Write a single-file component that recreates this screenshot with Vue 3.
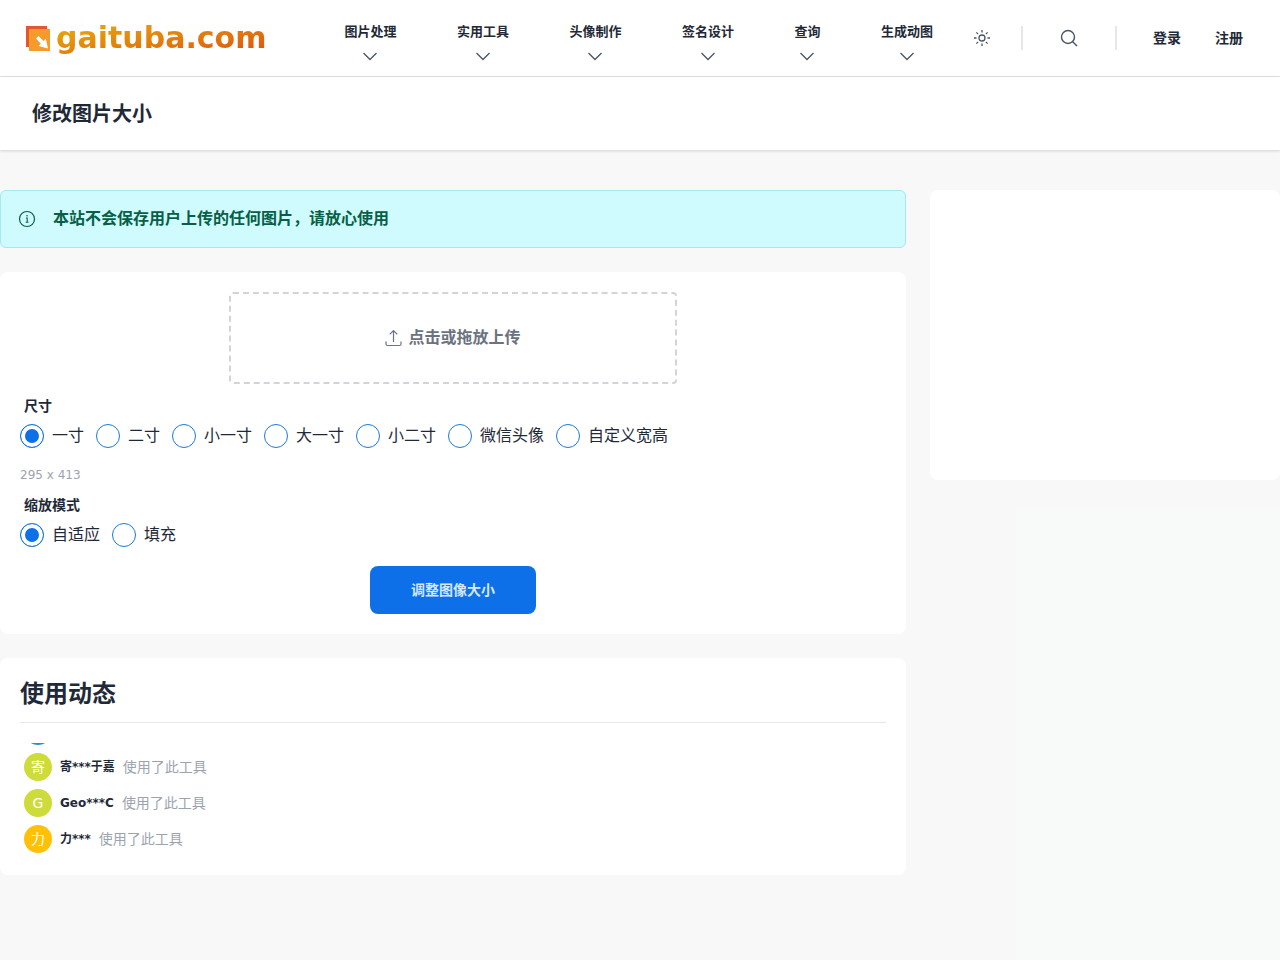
<script setup>
import { ref, computed } from 'vue'

const menus = ['图片处理', '实用工具', '头像制作', '签名设计', '查询', '生成动图']

const sizes = [
  { label: '一寸', hint: '295 x 413' },
  { label: '二寸', hint: '413 x 579' },
  { label: '小一寸', hint: '260 x 378' },
  { label: '大一寸', hint: '390 x 567' },
  { label: '小二寸', hint: '413 x 531' },
  { label: '微信头像', hint: '200 x 200' },
  { label: '自定义宽高', hint: '' },
]
const modes = ['自适应', '填充']

const size = ref('一寸')
const mode = ref('自适应')
const hint = computed(() => sizes.find((s) => s.label === size.value).hint)

const activity = [
  { initial: '', name: '', tone: 'blue' },
  { initial: '寄', name: '寄***于嘉', tone: 'lime' },
  { initial: 'G', name: 'Geo***C', tone: 'lime' },
  { initial: '力', name: '力***', tone: 'amber' },
]
</script>

<template>
  <div class="page">
    <header class="topbar">
      <a class="brand" href="#">
        <svg class="brand-mark" viewBox="0 0 26 26" aria-hidden="true">
          <rect x="1" y="1" width="21" height="21" fill="#e2572b" />
          <rect x="4" y="4" width="21" height="22" fill="#f79a2c" />
          <path d="M11 13.500 L13.500 11 L18.500 16 L20.800 13.800 L23 23.500 L13.500 21 L15.800 18.700 Z" fill="#fff" />
        </svg>
        <span class="brand-name">gaituba.com</span>
      </a>
      <nav class="nav">
        <button v-for="m in menus" :key="m" type="button" class="nav-item">
          <span>{{ m }}</span>
          <svg width="16" height="16" viewBox="0 0 16 16" fill="none" stroke="currentColor" stroke-width="1.300" aria-hidden="true">
            <path d="M1.500 5 L8 11.500 L14.500 5" />
          </svg>
        </button>
      </nav>
      <div class="tools">
        <button type="button" class="icon-btn" aria-label="切换主题">
          <svg width="16" height="16" viewBox="0 0 16 16" fill="none" stroke="currentColor" stroke-width="1.300" aria-hidden="true">
            <circle cx="8" cy="8" r="3" />
            <path d="M8 0v2.500M8 13.500V16M0 8h2.500M13.500 8H16M2.400 2.400l1.700 1.700M11.900 11.900l1.700 1.700M2.400 13.600l1.700-1.700M11.900 4.100l1.700-1.700" />
          </svg>
        </button>
        <span class="rule"></span>
        <button type="button" class="icon-btn search" aria-label="搜索">
          <svg width="18" height="18" viewBox="0 0 18 18" fill="none" stroke="currentColor" stroke-width="1.400" aria-hidden="true">
            <circle cx="8" cy="8" r="6.500" />
            <path d="M12.700 12.700 L17 17" />
          </svg>
        </button>
        <span class="rule"></span>
        <div class="account">
          <a href="#">登录</a>
          <a href="#">注册</a>
        </div>
      </div>
    </header>

    <div class="titlebar"><h1>修改图片大小</h1></div>

    <div class="columns">
      <main class="main">
        <div class="notice" role="note">
          <svg width="18" height="18" viewBox="0 0 18 18" fill="none" stroke="currentColor" aria-hidden="true">
            <circle cx="9" cy="9" r="7.500" stroke-width="1.200" />
            <path d="M8 8h1.200v4M7.700 12.200h2.800" stroke-width="1.100" />
            <circle cx="9" cy="5.800" r="0.800" fill="currentColor" stroke="none" />
          </svg>
          <span>本站不会保存用户上传的任何图片，请放心使用</span>
        </div>

        <form class="card form" @submit.prevent>
          <button type="button" class="drop">
            <svg width="17" height="18" viewBox="0 0 17 18" fill="none" stroke="currentColor" stroke-width="1.200" aria-hidden="true">
              <path d="M1 12.500v2.500q0 1.500 1.500 1.500h12q1.500 0 1.500-1.500V12.500M8.500 13V1.500M4.700 5.300L8.500 1.500l3.800 3.800" />
            </svg>
            <span>点击或拖放上传</span>
          </button>

          <fieldset>
            <legend>尺寸</legend>
            <div class="options">
              <label v-for="s in sizes" :key="s.label">
                <input v-model="size" type="radio" name="size" :value="s.label" />
                <span>{{ s.label }}</span>
              </label>
            </div>
          </fieldset>
          <p class="hint">{{ hint }}</p>
          <fieldset>
            <legend>缩放模式</legend>
            <div class="options">
              <label v-for="m in modes" :key="m">
                <input v-model="mode" type="radio" name="mode" :value="m" />
                <span>{{ m }}</span>
              </label>
            </div>
          </fieldset>
          <button type="submit" class="submit">调整图像大小</button>
        </form>

        <section class="card feed">
          <h2>使用动态</h2>
          <div class="feed-window">
            <ul>
              <li v-for="(a, i) in activity" :key="i">
                <span class="avatar" :class="a.tone">{{ a.initial }}</span>
                <template v-if="a.name">
                  <strong>{{ a.name }}</strong>
                  <span class="did">使用了此工具</span>
                </template>
              </li>
            </ul>
          </div>
        </section>
      </main>

      <aside class="side">
        <div class="side-card"></div>
        <div class="side-tint"></div>
      </aside>
    </div>
  </div>
</template>

<style>
body {
  margin: 0;
  background: #f8f8f8;
}
</style>

<style scoped>
* {
  box-sizing: border-box;
}
.page {
  display: flex;
  flex-direction: column;
  min-height: 100vh;
  color: #1f2937;
  font-family: "DejaVu Sans", "Noto Sans CJK SC", sans-serif;
  font-size: 16px;
  line-height: 24px;
}
button {
  padding: 0;
  border: 0;
  background: none;
  color: inherit;
  font: inherit;
  cursor: pointer;
}
a {
  color: inherit;
  text-decoration: none;
}
svg {
  display: block;
  flex: none;
}
.topbar {
  display: flex;
  align-items: center;
  height: 77px;
  padding: 0 32px 0 25px;
  border-bottom: 1px solid #e2e3e5;
  background: #fff;
}
.brand {
  display: flex;
  align-items: center;
  gap: 5px;
}
.brand-mark {
  width: 26px;
  height: 26px;
}
.brand-name {
  font-size: 30px;
  line-height: 36px;
  font-weight: 700;
  color: transparent;
  background: linear-gradient(to right bottom, #eab308, #dd4f10);
  -webkit-background-clip: text;
  background-clip: text;
}
.nav {
  flex: 1;
  display: flex;
  justify-content: space-between;
  padding: 10px 41px 0 78px;
}
.nav-item {
  display: flex;
  flex-direction: column;
  align-items: center;
  gap: 6px;
  font-size: 13px;
  line-height: 20px;
  font-weight: 700;
}
.nav-item svg {
  color: #4b5563;
}
.tools {
  display: flex;
  align-items: center;
}
.icon-btn {
  color: #4b5563;
}
.search {
  padding: 0 6px;
}
.rule {
  width: 2px;
  height: 24px;
  margin: 0 31px;
  background: #e5e7eb;
}
.account {
  display: flex;
  gap: 24px;
  font-size: 14px;
  font-weight: 700;
}
.account a {
  padding: 0 5px;
}
.titlebar {
  padding: 21px 32px 20px;
  background: #fff;
  box-shadow: 0 1px 3px rgba(0, 0, 0, 0.16);
}
h1 {
  margin: 0;
  font-size: 20px;
  line-height: 32px;
  font-weight: 700;
}
.columns {
  flex: 1;
  display: grid;
  grid-template-columns: minmax(0, 1fr) 350px;
  gap: 24px;
  padding-top: 40px;
}
.main {
  display: flex;
  flex-direction: column;
  gap: 24px;
}
.notice {
  display: flex;
  align-items: center;
  gap: 17px;
  padding: 16px 17px;
  border: 1px solid #a5e8f0;
  border-radius: 6px;
  background: #cffafe;
  color: #065f46;
  font-weight: 700;
}
.card {
  padding: 20px;
  border-radius: 8px;
  background: #fff;
}
.form {
  display: flex;
  flex-direction: column;
}
.drop {
  display: flex;
  align-items: center;
  justify-content: center;
  gap: 6px;
  align-self: center;
  width: 448px;
  max-width: 100%;
  height: 92px;
  margin-bottom: 12px;
  border: 2px dashed #d1d5db;
  border-radius: 4px;
  color: #6b7280;
  font-weight: 700;
}
fieldset {
  min-width: 0;
  margin: 0;
  padding: 0;
  border: 0;
}
legend {
  padding: 0 4px;
  font-size: 14px;
  line-height: 20px;
  font-weight: 700;
}
.options {
  display: flex;
  flex-wrap: wrap;
  gap: 12px;
  padding-top: 8px;
}
.options label {
  display: flex;
  align-items: center;
  gap: 8px;
}
.options input {
  appearance: none;
  width: 24px;
  height: 24px;
  margin: 0;
  border: 1px solid #1a78d6;
  border-radius: 50%;
  background: #fff;
}
.options input:checked {
  background: #0d70e8;
  box-shadow: inset 0 0 0 4px #fff;
}
.hint {
  margin: 16px 0 9px;
  min-height: 22px;
  font-size: 12px;
  line-height: 22px;
  color: #9ca3af;
}
.submit {
  align-self: center;
  height: 48px;
  margin-top: 19px;
  padding: 0 41px;
  border-radius: 8px;
  background: #0d70e8;
  color: #d5e7fc;
  font-size: 14px;
  font-weight: 700;
}
h2 {
  margin: 0;
  padding-bottom: 12px;
  border-bottom: 1px solid #e5e7eb;
  font-size: 24px;
  line-height: 32px;
  font-weight: 700;
}
.feed-window {
  display: flex;
  align-items: flex-end;
  height: 112px;
  margin-top: 20px;
  overflow: hidden;
}
ul {
  margin: 0;
  padding: 0 4px 2px;
  list-style: none;
}
li {
  display: flex;
  align-items: center;
  gap: 8px;
  padding-top: 8px;
}
.avatar {
  width: 28px;
  height: 28px;
  border-radius: 50%;
  color: #fff;
  font-size: 14px;
  line-height: 28px;
  text-align: center;
}
.blue {
  background: #2196c3;
}
.lime {
  background: #cddc39;
}
.amber {
  background: #ffc107;
}
strong {
  font-size: 12px;
}
.did {
  color: #9ca3af;
  font-size: 14px;
}
.side {
  display: flex;
  flex-direction: column;
  gap: 28px;
}
.side-card {
  height: 290px;
  border-radius: 8px;
  background: #fff;
}
.side-tint {
  flex: 1;
  margin-left: 86px;
  background: #f8faf9;
}
</style>
